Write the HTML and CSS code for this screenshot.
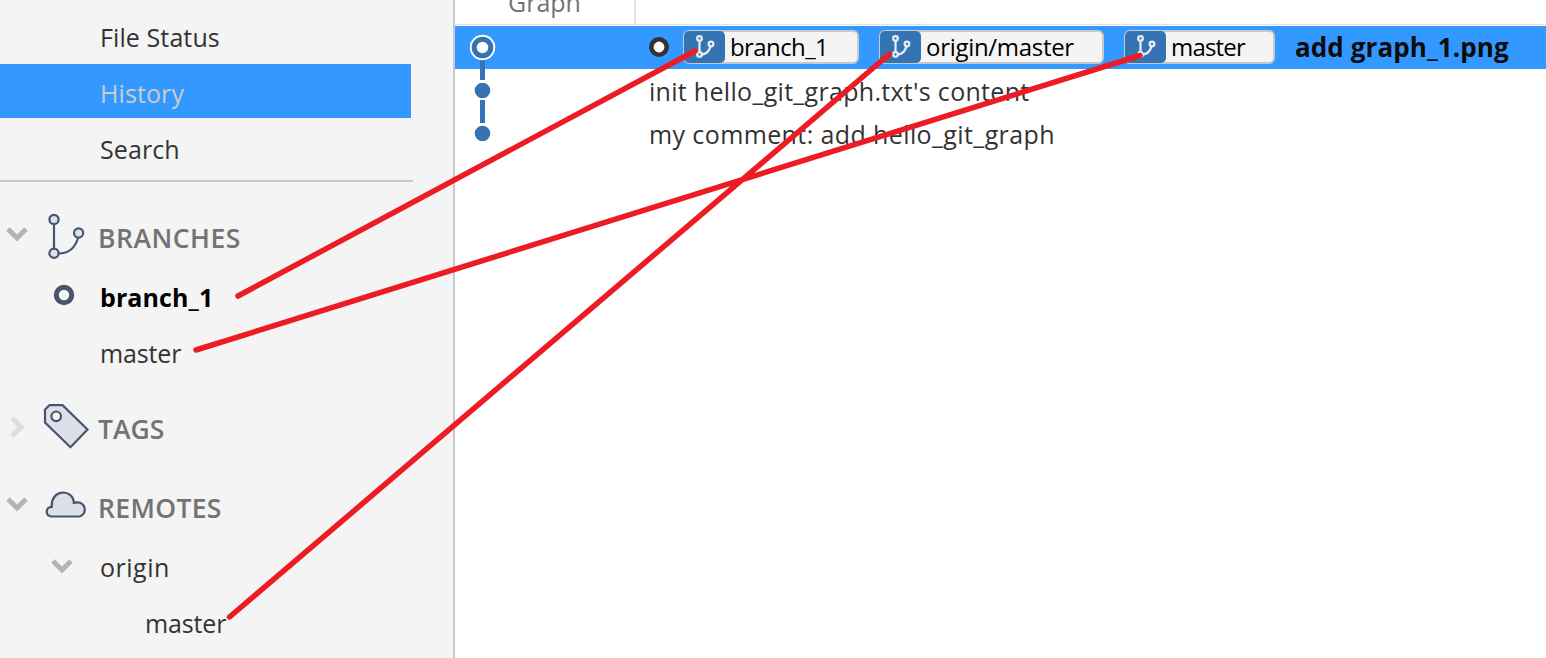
FILE: index.html
```
<!DOCTYPE html>
<html lang="en">
<head>
<meta charset="utf-8">
<title>History</title>
<link rel="stylesheet" href="styles.css">
</head>
<body>
<svg class="defs" width="0" height="0">
  <symbol id="fork" viewBox="0 0 20 24">
    <path d="M4.500 6v11M7 19.500c4.500-.6 7.500-4 8.500-8.500" />
    <circle cx="4.500" cy="3.500" r="2.300"/><circle cx="4.500" cy="19.500" r="2.300"/><circle cx="16" cy="9" r="2.300"/>
  </symbol>
</svg>
<div class="app">
  <nav class="sidebar">
    <div class="views">
      <div class="view"><span>File Status</span></div>
      <div class="view active"><span>History</span></div>
      <div class="view"><span>Search</span></div>
    </div>
    <section class="group branches">
      <div class="head">
        <svg class="chev" width="22" height="16" viewBox="0 0 22 16"><path d="M2 3l9 9 9-9"/></svg>
        <svg class="icon" width="48" height="50" viewBox="0 0 48 50"><path d="M12 12v26M16.500 42.500c11 0 17-7 19.500-15.500"/><circle cx="12" cy="8.500" r="4.600"/><circle cx="12" cy="42.300" r="4.600"/><circle cx="36.600" cy="22" r="4.600"/></svg>
        <span>BRANCHES</span>
      </div>
      <div class="item current"><svg class="dot" width="22" height="22" viewBox="0 0 22 22"><circle cx="11" cy="11" r="7.700"/></svg><span>branch_1</span></div>
      <div class="item branch"><span>master</span></div>
    </section>
    <section class="group tags">
      <div class="head">
        <svg class="chev closed" width="22" height="24" viewBox="0 0 22 24"><path d="M6 3l9 9-9 9"/></svg>
        <svg class="icon" width="48" height="50" viewBox="0 0 48 50"><path d="M3 7.500L7.500 3.200H20.500L45.500 27.500L28.500 45.200L3 20.500z"/><circle class="hole" cx="14.200" cy="14.300" r="4.800"/></svg>
        <span>TAGS</span>
      </div>
    </section>
    <section class="group remotes">
      <div class="head">
        <svg class="chev" width="22" height="16" viewBox="0 0 22 16"><path d="M2 3l9 9 9-9"/></svg>
        <svg class="icon" width="48" height="50" viewBox="0 0 48 50"><path d="M9 35.500C3 34.500 3.500 25.500 9.800 25.800C8.500 7.500 31.500 7.500 31.800 21.800C45 19 45.500 34 37.500 35.500z"/></svg>
        <span>REMOTES</span>
      </div>
      <div class="item remote"><svg class="chev sub" width="22" height="16" viewBox="0 0 22 16"><path d="M2 3l9 9 9-9"/></svg><span>origin</span></div>
      <div class="item branch nested"><span>master</span></div>
    </section>
  </nav>
  <main class="log">
    <div class="columns"><div class="col-graph"><span>Graph</span></div></div>
    <div class="body">
      <svg class="graph" width="60" height="129" viewBox="0 0 60 129">
        <path d="M27.500 34V54M27.500 74V97" />
        <circle class="halo" cx="27.500" cy="21.500" r="12.700"/>
        <circle class="ring" cx="27.500" cy="21.500" r="8.300"/>
        <circle cx="27.500" cy="64.500" r="7.800"/><circle cx="27.500" cy="107.500" r="7.800"/>
      </svg>
      <div class="commit selected">
        <svg class="head-dot" width="20" height="20" viewBox="0 0 20 20"><circle cx="10" cy="10" r="7.700"/></svg>
        <div class="ref ref-branch"><i><svg width="20" height="24"><use href="#fork"/></svg></i><span>branch_1</span></div>
        <div class="ref ref-origin"><i><svg width="20" height="24"><use href="#fork"/></svg></i><span>origin/master</span></div>
        <div class="ref ref-master"><i><svg width="20" height="24"><use href="#fork"/></svg></i><span>master</span></div>
        <strong>add graph_1.png</strong>
      </div>
      <div class="commit"><span>init hello_git_graph.txt's content</span></div>
      <div class="commit"><span>my comment: add hello_git_graph</span></div>
    </div>
  </main>
  <svg class="links" width="1546" height="658" viewBox="0 0 1546 658">
    <path d="M238 296L695 51M196 350L1140 55.500M229.500 617L889.500 54"/>
  </svg>
</div>
</body>
</html>
```
FILE: styles.css
```
* { box-sizing: border-box; }
body { margin: 0; }
.defs { position: absolute; }
.app {
  position: relative;
  display: flex;
  width: 1546px;
  height: 658px;
  overflow: hidden;
  background: #fff;
  color: #333;
  font: 25px/36px "Open Sans", "Noto Sans", sans-serif;
  white-space: nowrap;
}
.sidebar {
  width: 455px;
  flex: none;
  background: #f4f4f4;
  border-right: 2px solid #c8c8c8;
}
.views {
  display: grid;
  gap: 2px;
  width: 413px;
  height: 182px;
  padding-top: 8px;
  align-content: start;
  border-bottom: 2px solid #c8c8c8;
}
.view { height: 54px; padding: 11px 0 0 100px; width: 411px; letter-spacing: .1px; }
.view.active { background: #3398ff; color: #ccc; }
.head {
  display: grid;
  grid-template-columns: 42px 56px auto;
  align-items: center;
  height: 60px;
  margin-bottom: 1px;
  color: #737373;
  font-size: 26.500px;
  font-weight: 600;
  letter-spacing: .35px;
}
.branches { padding-top: 26px; }
.branches .head { letter-spacing: .5px; }
.tags { padding-top: 18px; }
.tags .head { letter-spacing: 0; }
.remotes { padding-top: 18px; }
.chev { margin: -8px 0 0 6px; fill: none; stroke: #b4b4b4; stroke-width: 5; }
.chev.closed { margin-top: -4px; stroke: #ddd; }
.icon { fill: #dde0e8; stroke: #475571; stroke-width: 2.200; margin-top: -5px; }
.hole { fill: #f4f4f4; }
.branches .icon path { fill: none; }
.item {
  display: grid;
  grid-template-columns: 100px auto;
  align-items: center;
  height: 56px;
}
.item > span { grid-column: 2; }
.item.branch { letter-spacing: -.15px; }
.item.remote { letter-spacing: .5px; }
.item.nested { grid-template-columns: 145px auto; }
.item.current { color: #000; font-weight: 700; letter-spacing: .1px; }
.dot { margin: -5px 0 0 53px; fill: none; stroke: #475571; stroke-width: 5; }
.chev.sub { margin: -3px 0 0 51px; }
.log { flex: 1; }
.columns { height: 26px; border-bottom: 1px solid #fff; box-shadow: inset 0 -1px #e0e0e0; }
.col-graph {
  display: flex;
  align-items: flex-start;
  width: 181px;
  height: 24px;
  border-right: 2px solid #e4e4e4;
  padding-left: 53px;
  color: #737373;
}
.col-graph span { margin-top: -16px; }
.body { display: grid; grid-template-columns: 60px auto; }
.graph { grid-row: 1 / 4; grid-column: 1; z-index: 1; fill: #3574b2; }
.graph path { stroke: #3574b2; stroke-width: 5; }
.graph .halo { fill: #fff; }
.graph .ring { fill: #fff; stroke: #3574b2; stroke-width: 5; }
.commit {
  grid-column: 1 / 3;
  display: flex;
  align-items: center;
  height: 43px;
  padding-left: 194px;
  letter-spacing: .3px;
}
.commit:nth-child(n + 3) { padding-top: 1px; }
.commit.selected { background: #3398ff; color: #0d0d0d; }
.commit:nth-child(2) { grid-row: 1; }
.commit:nth-child(3) { grid-row: 2; }
.commit:nth-child(4) { grid-row: 3; letter-spacing: .39px; }
.head-dot { fill: #fff; stroke: #333; stroke-width: 4.600; margin: -1px 14px 0 0; flex: none; }
.ref {
  display: flex;
  align-items: center;
  height: 34px;
  margin-top: -1px;
  border: 2px solid #c8c8c8;
  border-radius: 6px;
  background: #f4f4f4;
  color: #000;
  font-size: 24px;
  letter-spacing: -.6px;
}
.ref i {
  display: grid;
  place-items: center;
  width: 41px;
  height: 32px;
  margin: -1px 5px -1px -1px;
  border-radius: 5px;
  background: #3574b2;
}
.ref svg { fill: none; stroke: #e4ecf4; stroke-width: 2.300; }
.ref-branch { width: 176px; }
.ref-origin { width: 225px; margin-left: 20px; letter-spacing: -.3px; }
.ref-master { width: 151px; margin-left: 20px; letter-spacing: -.8px; }
.commit strong { margin: -1px 0 0 20px; font-size: 26px; letter-spacing: .1px; }
.links { position: absolute; inset: 0; fill: none; stroke: #ed1c24; stroke-width: 5.500; stroke-linecap: round; pointer-events: none; }
```
